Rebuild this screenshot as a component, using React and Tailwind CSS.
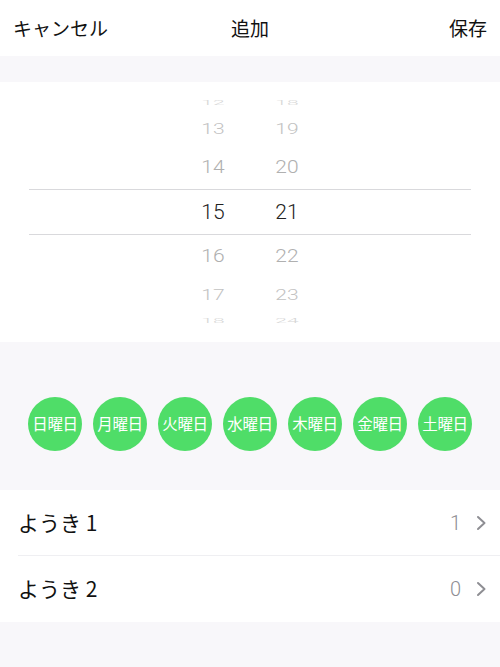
import React from "react";

const days = ["日曜日", "月曜日", "火曜日", "水曜日", "木曜日", "金曜日", "土曜日"];

// wheel rows: [hour, minute, row height, scaleY, colour]
const wheel = [
  ["12", "18", "h-[18px]", "scale-y-[0.3]", "text-[#d6d6d6]"],
  ["13", "19", "h-[34px]", "scale-y-[0.72]", "text-[#c2c2c2]"],
  ["14", "20", "h-[43px]", "scale-y-[0.9]", "text-[#b0b0b0]"],
  ["15", "21", "h-[46px]", "scale-y-100", "text-[#222222]"],
  ["16", "22", "h-[43px]", "scale-y-[0.9]", "text-[#b0b0b0]"],
  ["17", "23", "h-[34px]", "scale-y-[0.72]", "text-[#c2c2c2]"],
  ["18", "24", "h-[18px]", "scale-y-[0.3]", "text-[#d6d6d6]"],
];

function Chevron() {
  return (
    <svg width="11" height="16" viewBox="0 0 11 16" className="ml-[15px]">
      <path d="M2 2 L8.5 8 L2 14" fill="none" stroke="#8e8e93" strokeWidth="2" strokeLinecap="round" strokeLinejoin="round" />
    </svg>
  );
}

function Row({ label, value, border }) {
  return (
    <div className={"flex items-center h-[66px] ml-[18px] pr-[13px] " + (border ? "border-b border-[#efeff2]" : "")}>
      <span className="flex-1 text-[21px] text-[#111]">{label}</span>
      <span className="text-[20px] font-light text-[#8e8e93] font-['Roboto',sans-serif]">{value}</span>
      <Chevron />
    </div>
  );
}

export default function App() {
  return (
    <div className="min-h-screen bg-[#f8f7fa] font-['Noto_Sans_CJK_JP','Noto_Sans',sans-serif]">
      <div className="flex items-center justify-between h-[56px] bg-white px-[13px] text-[19px] text-[#111]">
        <button className="w-[110px] text-left">キャンセル</button>
        <span className="text-[#111]">追加</span>
        <button className="w-[110px] text-right">保存</button>
      </div>

      <div className="h-[26px]" />

      <div className="bg-white h-[260px] pt-[12px] font-['Roboto',sans-serif] font-light">
        {wheel.map(([h, m, hh, sc, col], i) => (
          <div
            key={h}
            className={
              "flex items-center justify-center " + hh + " " +
              (i === 3 ? "mx-[29px] border-y border-[#d9d9dc]" : "")
            }
          >
            <span className={"w-[74px] text-center text-[21px] leading-none " + sc + " " + col}>{h}</span>
            <span className={"w-[74px] text-center text-[21px] leading-none " + sc + " " + col}>{m}</span>
          </div>
        ))}
      </div>

      <div className="flex justify-center gap-[11px] pt-[55px] pb-[39px]">
        {days.map((d) => (
          <div
            key={d}
            className="flex items-center justify-center w-[54px] h-[54px] rounded-full bg-[#4fdd68] text-white text-[15.5px] tracking-[-0.3px]"
          >
            {d}
          </div>
        ))}
      </div>

      <div className="bg-white">
        <Row label="ようき 1" value="1" border />
        <Row label="ようき 2" value="0" />
      </div>
    </div>
  );
}
